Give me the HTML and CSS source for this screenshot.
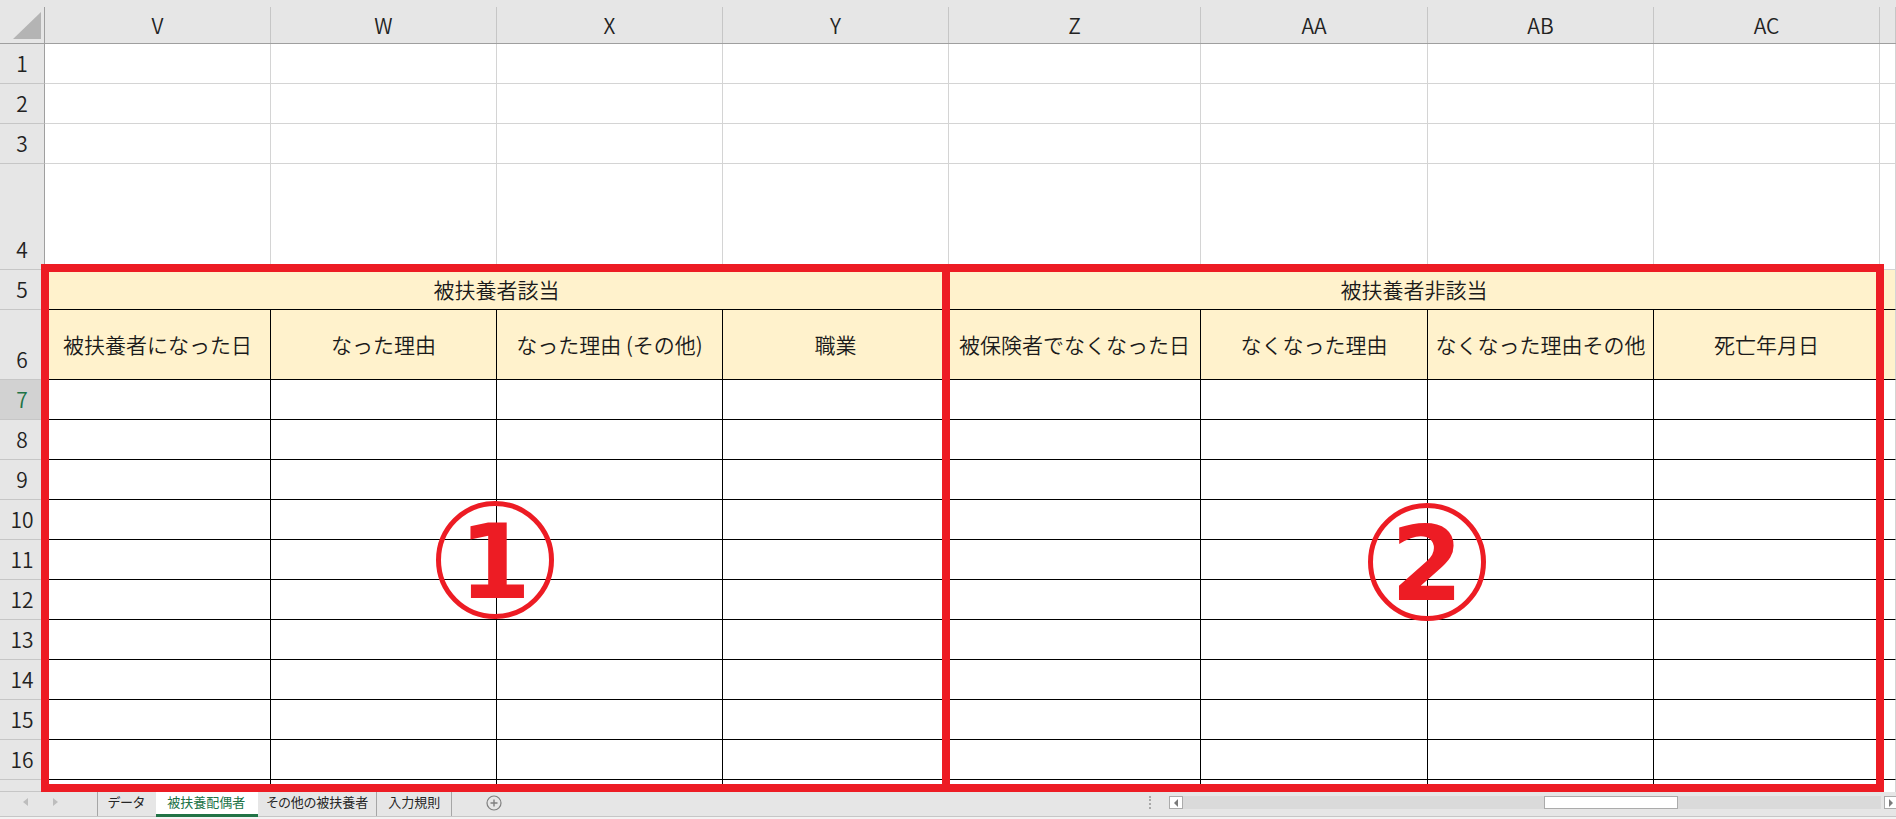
FILE: index.html
```html
<!DOCTYPE html>
<html lang="ja">
<head>
  <meta charset="UTF-8" />
  <title>被扶養配偶者</title>
  <link rel="stylesheet" href="styles.css">
</head>
<body>
  <div class="sheet">
    <div class="row head">
      <div class="corner"></div>
      <div class="ch">V</div><div class="ch">W</div><div class="ch">X</div><div class="ch">Y</div>
      <div class="ch">Z</div><div class="ch">AA</div><div class="ch">AB</div><div class="ch">AC</div><div class="ch"></div>
    </div>

    <div class="row">
      <div class="rh">1</div>
      <div class="c"></div><div class="c"></div><div class="c"></div><div class="c"></div><div class="c"></div>
      <div class="c"></div><div class="c"></div><div class="c"></div><div class="c"></div>
    </div>
    <div class="row">
      <div class="rh">2</div>
      <div class="c"></div><div class="c"></div><div class="c"></div><div class="c"></div><div class="c"></div>
      <div class="c"></div><div class="c"></div><div class="c"></div><div class="c"></div>
    </div>
    <div class="row">
      <div class="rh">3</div>
      <div class="c"></div><div class="c"></div><div class="c"></div><div class="c"></div><div class="c"></div>
      <div class="c"></div><div class="c"></div><div class="c"></div><div class="c"></div>
    </div>
    <div class="row tall">
      <div class="rh">4</div>
      <div class="c"></div><div class="c"></div><div class="c"></div><div class="c"></div><div class="c"></div>
      <div class="c"></div><div class="c"></div><div class="c"></div><div class="c"></div>
    </div>

    <!-- table header -->
    <div class="row tbl hdr">
      <div class="rh">5</div>
      <div class="c span4">被扶養者該当</div>
      <div class="c span4">被扶養者非該当</div>
      <div class="c"></div>
    </div>
    <div class="row tbl hdr mid">
      <div class="rh">6</div>
      <div class="c">被扶養者になった日</div>
      <div class="c">なった理由</div>
      <div class="c">なった理由 (その他)</div>
      <div class="c">職業</div>
      <div class="c">被保険者でなくなった日</div>
      <div class="c">なくなった理由</div>
      <div class="c">なくなった理由その他</div>
      <div class="c">死亡年月日</div>
      <div class="c"></div>
    </div>

    <div class="row tbl">
      <div class="rh sel">7</div>
      <div class="c"></div><div class="c"></div><div class="c"></div><div class="c"></div><div class="c"></div>
      <div class="c"></div><div class="c"></div><div class="c"></div><div class="c"></div>
    </div>
    <div class="row tbl">
      <div class="rh">8</div>
      <div class="c"></div><div class="c"></div><div class="c"></div><div class="c"></div><div class="c"></div>
      <div class="c"></div><div class="c"></div><div class="c"></div><div class="c"></div>
    </div>
    <div class="row tbl">
      <div class="rh">9</div>
      <div class="c"></div><div class="c"></div><div class="c"></div><div class="c"></div><div class="c"></div>
      <div class="c"></div><div class="c"></div><div class="c"></div><div class="c"></div>
    </div>
    <div class="row tbl">
      <div class="rh">10</div>
      <div class="c"></div><div class="c"></div><div class="c"></div><div class="c"></div><div class="c"></div>
      <div class="c"></div><div class="c"></div><div class="c"></div><div class="c"></div>
    </div>
    <div class="row tbl">
      <div class="rh">11</div>
      <div class="c"></div><div class="c"></div><div class="c"></div><div class="c"></div><div class="c"></div>
      <div class="c"></div><div class="c"></div><div class="c"></div><div class="c"></div>
    </div>
    <div class="row tbl">
      <div class="rh">12</div>
      <div class="c"></div><div class="c"></div><div class="c"></div><div class="c"></div><div class="c"></div>
      <div class="c"></div><div class="c"></div><div class="c"></div><div class="c"></div>
    </div>
    <div class="row tbl">
      <div class="rh">13</div>
      <div class="c"></div><div class="c"></div><div class="c"></div><div class="c"></div><div class="c"></div>
      <div class="c"></div><div class="c"></div><div class="c"></div><div class="c"></div>
    </div>
    <div class="row tbl">
      <div class="rh">14</div>
      <div class="c"></div><div class="c"></div><div class="c"></div><div class="c"></div><div class="c"></div>
      <div class="c"></div><div class="c"></div><div class="c"></div><div class="c"></div>
    </div>
    <div class="row tbl">
      <div class="rh">15</div>
      <div class="c"></div><div class="c"></div><div class="c"></div><div class="c"></div><div class="c"></div>
      <div class="c"></div><div class="c"></div><div class="c"></div><div class="c"></div>
    </div>
    <div class="row tbl">
      <div class="rh">16</div>
      <div class="c"></div><div class="c"></div><div class="c"></div><div class="c"></div><div class="c"></div>
      <div class="c"></div><div class="c"></div><div class="c"></div><div class="c"></div>
    </div>
    <div class="row tbl cut">
      <div class="rh"></div>
      <div class="c"></div><div class="c"></div><div class="c"></div><div class="c"></div><div class="c"></div>
      <div class="c"></div><div class="c"></div><div class="c"></div><div class="c"></div>
    </div>

    <!-- red boxes drawn over the sheet -->
    <div class="frame left"></div>
    <div class="frame right"></div>
    <div class="mark one">1</div>
    <div class="mark two">2</div>
  </div>

  <div class="tabbar">
    <div class="nav">
      <span class="arrow prev"></span>
      <span class="arrow next"></span>
    </div>
    <span class="tab first">データ</span>
    <span class="tab active">被扶養配偶者</span>
    <span class="tab other">その他の被扶養者</span>
    <span class="tab last">入力規則</span>
    <svg class="add" width="16" height="16" viewBox="0 0 16 16">
      <circle cx="8" cy="8" r="7" fill="none" stroke="#7f7f7f" stroke-width="1.2"/>
      <path d="M8 4.5v7M4.5 8h7" stroke="#7f7f7f" stroke-width="1.4"/>
    </svg>

    <div class="hscroll">
      <span class="split"></span>
      <span class="sbtn"><span class="tri l"></span></span>
      <span class="track"><span class="thumb"></span></span>
      <span class="sbtn r"><span class="tri rt"></span></span>
    </div>
  </div>
</body>
</html>
```

FILE: styles.css
```css
* {
  box-sizing: border-box;
}
body {
  margin: 0;
  width: 1896px;
  height: 819px;
  overflow: hidden;
  background: #f3f3f3;
  font-family: "Noto Sans CJK JP", "Liberation Sans", sans-serif;
  font-weight: 350;
  color: #1a1a1a;
}

/* sheet grid */
.sheet {
  position: relative;
  height: 792px;
  overflow: hidden;
  background: #fff;
}
.row {
  display: grid;
  grid-template-columns: 45px 226px 226px 226px 226px 252px 227px 226px 226px 16px;
  height: 40px;
}
.row.tall { height: 106px; }
.row.mid { height: 70px; }
.row.cut { height: 12px; }

.row.head {
  height: 44px;
  background: #e6e6e6;
  border-bottom: 1px solid #9f9f9f;
}
.corner {
  position: relative;
  margin-top: 7px;
  border-right: 1px solid #9f9f9f;
}
.corner::after {
  content: "";
  position: absolute;
  left: 13px;
  top: 5px;
  width: 28px;
  height: 27px;
  background: #b4b4b4;
  clip-path: polygon(100% 0, 100% 100%, 0 100%);
}
.ch {
  margin-top: 7px;
  border-right: 1px solid #c6c6c6;
  display: flex;
  align-items: center;
  justify-content: center;
  font-size: 21px;
  color: #222;
}

.rh {
  background: #e6e6e6;
  border-right: 1px solid #9f9f9f;
  border-bottom: 1px solid #c6c6c6;
  display: flex;
  align-items: flex-end;
  justify-content: center;
  line-height: 39px;
  font-size: 21px;
  color: #222;
}
.rh.sel {
  background: #d2d2d2;
  color: #217346;
}

.c {
  border-right: 1px solid #d4d4d4;
  border-bottom: 1px solid #d4d4d4;
}
.tbl .c {
  border-color: #000;
}
.tbl .c:last-child {
  border-right-color: #d4d4d4;
}
.cut .c {
  border-bottom: none;
}
.hdr .c {
  background: #fff2cc;
  display: flex;
  align-items: center;
  justify-content: center;
  padding-bottom: 2px;
  font-size: 21px;
  white-space: nowrap;
}
.span4 {
  grid-column: span 4;
}

/* annotation shapes */
.frame {
  position: absolute;
  top: 264px;
  height: 528px;
  border: 8px solid #ed1c24;
}
.frame.left { left: 41px; width: 909px; }
.frame.right { left: 942px; width: 942px; }

.mark {
  position: absolute;
  width: 118px;
  height: 118px;
  border: 5px solid #ed1c24;
  border-radius: 50%;
  display: flex;
  align-items: center;
  justify-content: center;
  padding-top: 4px;
  font: bold 104px/1 "DejaVu Sans", sans-serif;
  color: #ed1c24;
}
.mark.one { left: 436px; top: 501px; }
.mark.two { left: 1368px; top: 503px; }

/* sheet tabs + scroll */
.tabbar {
  display: flex;
  align-items: flex-start;
  height: 25px;
  background: #e6e6e6;
  border-bottom: 1px solid #c6c6c6;
  font-size: 13px;
  font-weight: 400;
  font-feature-settings: "palt";
}
.nav {
  width: 97px;
  height: 20px;
  display: flex;
  align-items: center;
  gap: 25px;
  padding-left: 23px;
}
.arrow {
  width: 0;
  height: 0;
  border-top: 4px solid transparent;
  border-bottom: 4px solid transparent;
}
.arrow.prev { border-right: 5px solid #bdbdbd; }
.arrow.next { border-left: 5px solid #bdbdbd; }

.tab {
  height: 24px;
  line-height: 20px;
  padding: 0 11px;
  color: #262626;
  white-space: nowrap;
}
.tab.first {
  border-left: 1px solid #a6a6a6;
  padding-left: 10px;
  padding-right: 12px;
}
.tab.other {
  padding: 0 8px;
}
.tab.last {
  border-left: 1px solid #a6a6a6;
  border-right: 1px solid #a6a6a6;
}
.tab.active {
  height: 25px;
  background: #fff;
  color: #217346;
  border-bottom: 3px solid #217346;
  padding-right: 13px;
}
.add {
  margin: 3px 0 0 34px;
}

.hscroll {
  margin-left: auto;
  width: 750px;
  display: flex;
  padding-top: 4px;
}
.split {
  width: 20px;
  height: 13px;
  margin-left: 3px;
  border-left: 2px dotted #a8a8a8;
}
.sbtn {
  width: 14px;
  height: 13px;
  background: #fff;
  border: 1px solid #ababab;
  display: flex;
  align-items: center;
  justify-content: center;
}
.sbtn.r {
  width: 12px;
  margin-left: 3px;
  border-right: none;
}
.tri {
  width: 0;
  height: 0;
  border-top: 4px solid transparent;
  border-bottom: 4px solid transparent;
}
.tri.l { border-right: 4px solid #7a7a7a; }
.tri.rt { border-left: 4px solid #7a7a7a; }
.track {
  flex: 1;
  height: 13px;
  background: #dadada;
  display: flex;
}
.thumb {
  margin-left: 361px;
  width: 134px;
  height: 13px;
  background: #fff;
  border: 1px solid #ababab;
}
```
